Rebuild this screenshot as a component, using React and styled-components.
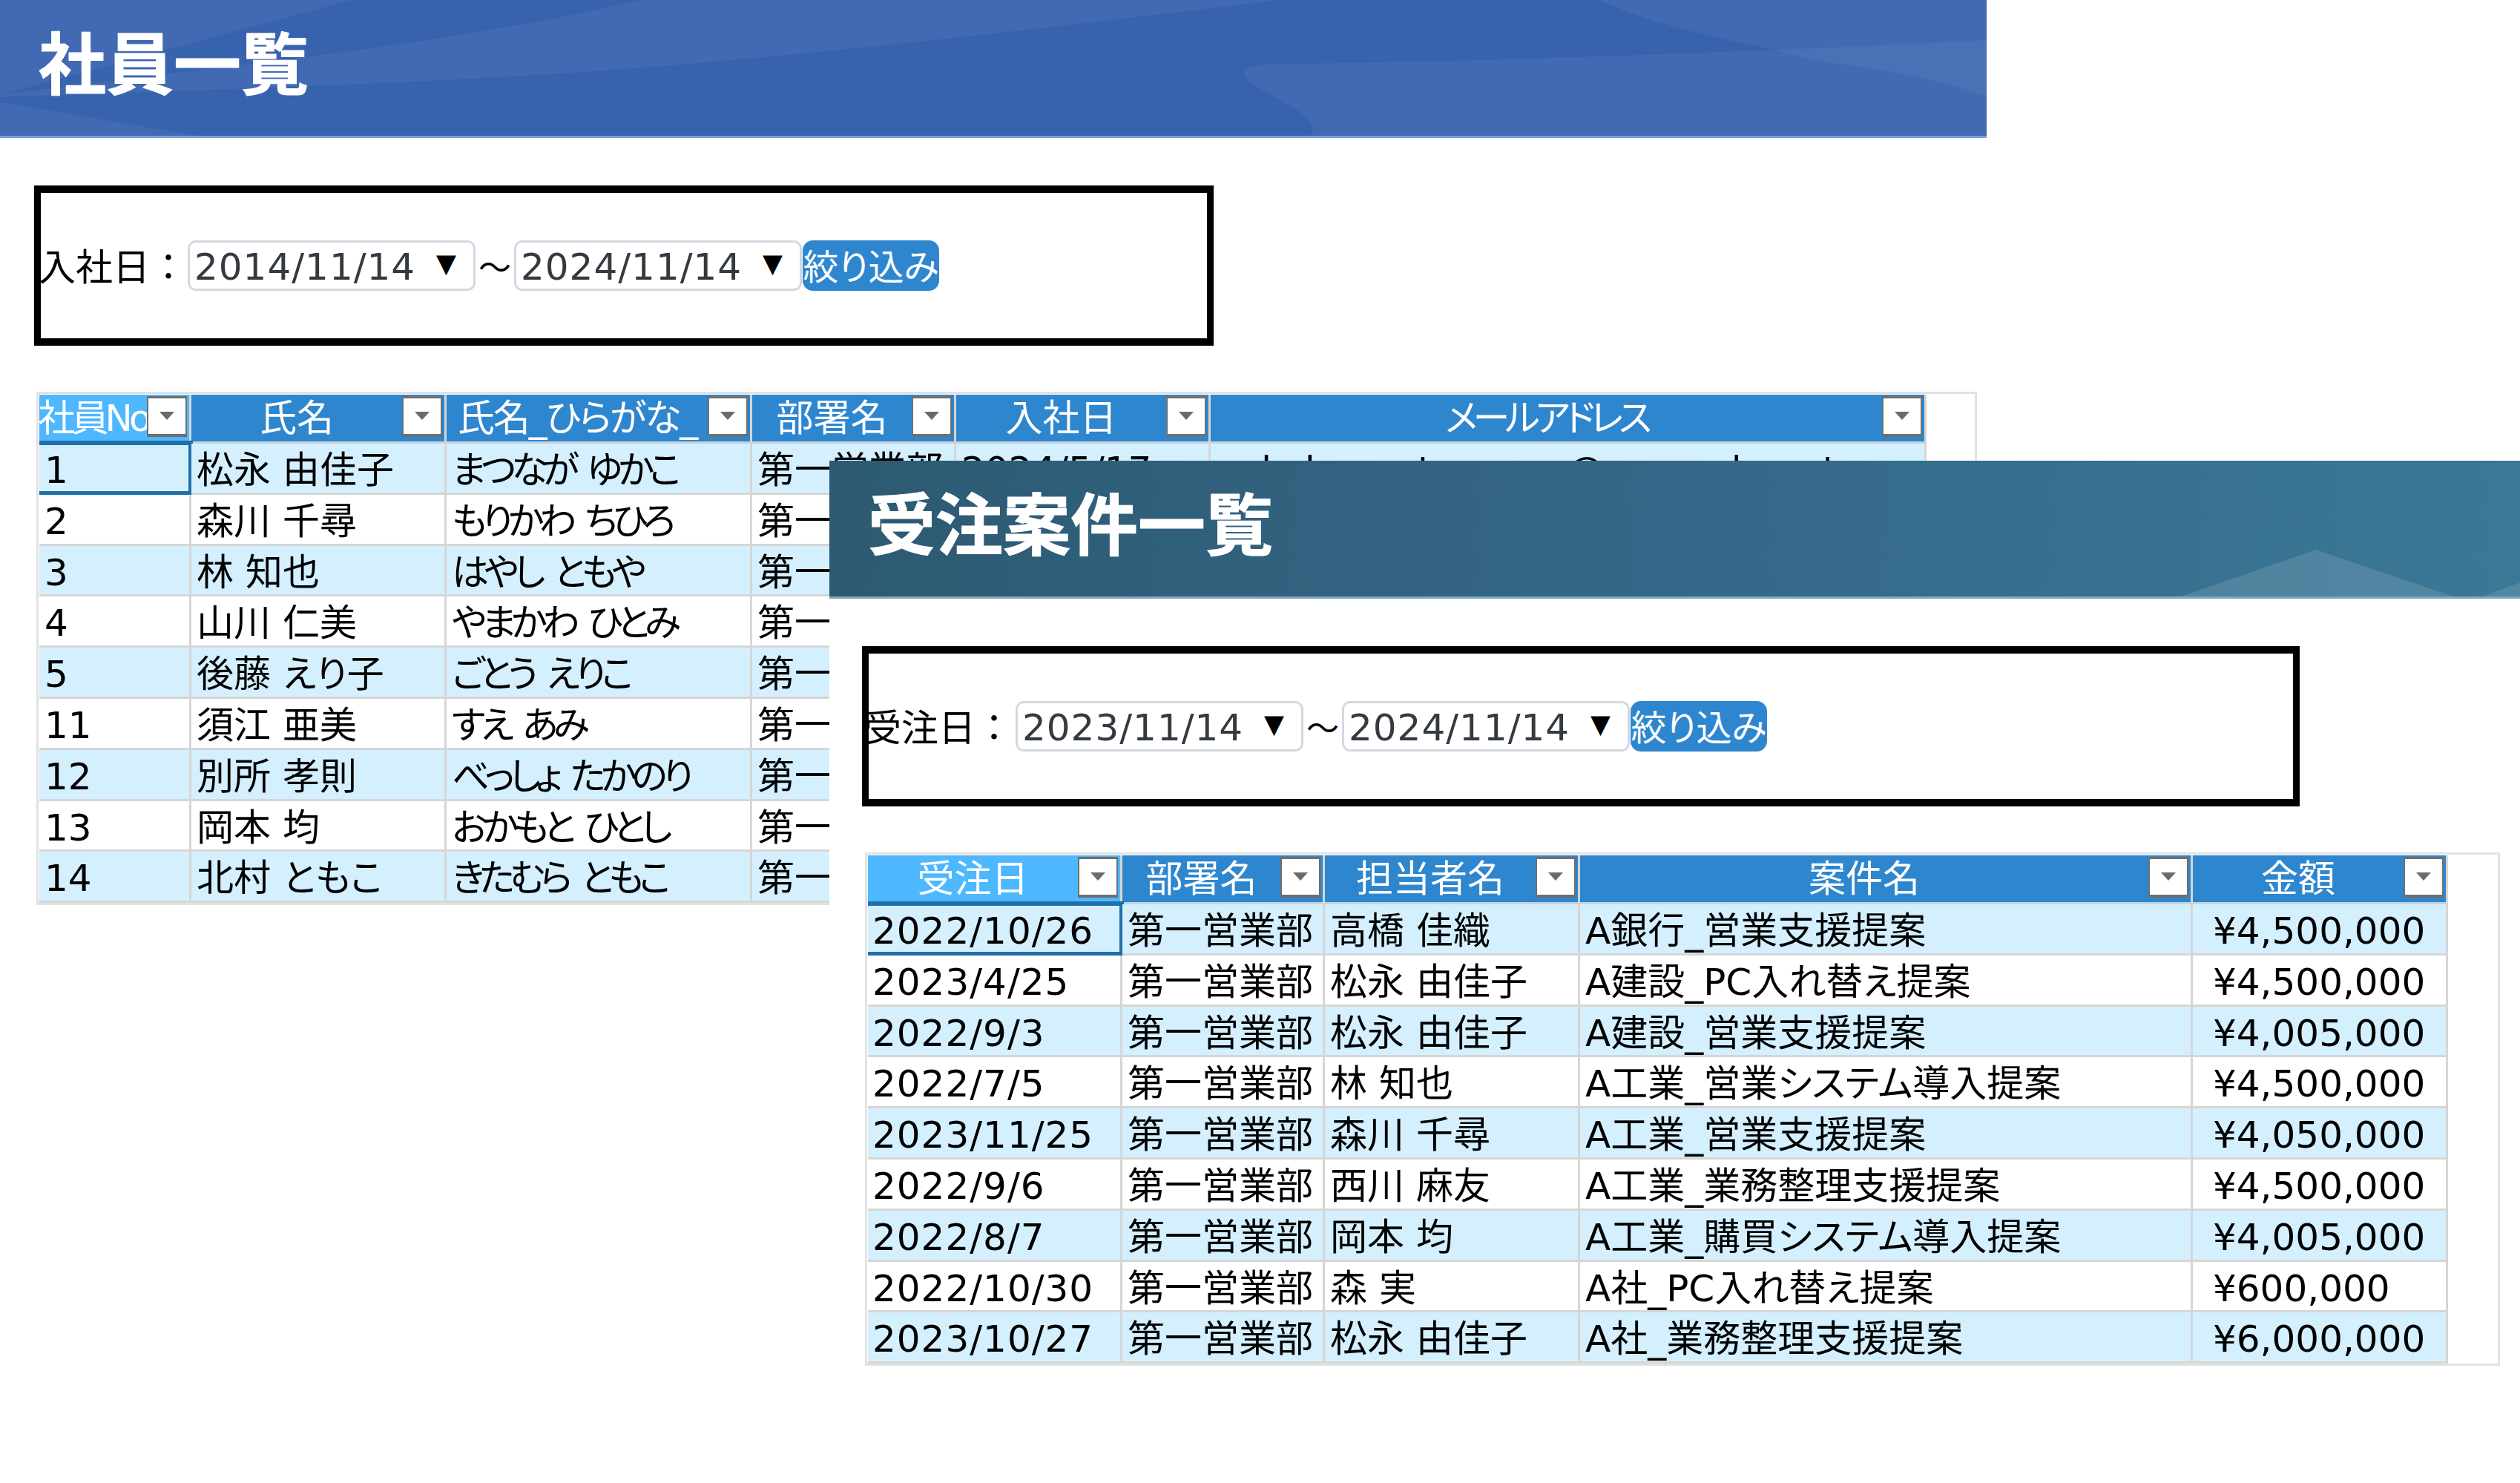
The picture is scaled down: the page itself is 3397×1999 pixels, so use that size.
import styled, { createGlobalStyle } from "styled-components";

const GlobalStyle = createGlobalStyle`
  html, body {
    margin: 0;
    padding: 0;
    background: #fff;
  }
  body {
    font-family: "DejaVu Sans", "Noto Sans CJK JP", sans-serif;
    font-size: 50px;
    color: #000;
  }
`;

const Page = styled.div`
  position: relative;
  width: 3397px;
  height: 1999px;
  overflow: hidden;
  background: #fff;
`;

const FrontWindow = styled.section`
  position: absolute;
  left: 1118px;
  top: 621px;
  right: 0;
  bottom: 0;
  background: #fff;
`;

const Banner = styled.header`
  position: relative;
  box-sizing: border-box;
  height: 186px;
  width: ${(p) => p.$width};
  padding-left: 52px;
  display: flex;
  align-items: center;
  overflow: hidden;
  background: ${(p) => p.$bg};
  border-bottom: 3px solid ${(p) => p.$line};
`;

const BannerArt = styled.svg`
  position: absolute;
  left: 0;
  top: 0;
  width: 100%;
  height: 100%;
`;

const Title = styled.h1`
  position: relative;
  margin: 0 0 23px;
  font-family: "Noto Sans CJK JP", sans-serif;
  font-size: 91px;
  font-weight: 700;
  line-height: 1;
  color: #fff;
  -webkit-text-stroke: 1px #fff;
`;

const FilterBox = styled.div`
  box-sizing: border-box;
  width: ${(p) => p.$width};
  height: 216px;
  margin: 64px 0 0 ${(p) => p.$left};
  display: flex;
  align-items: center;
  border: solid #000;
  border-width: 10px 9px;
  background: #fff;
`;

const FilterLabel = styled.span`
  flex: none;
  width: ${(p) => 198 + p.$shift}px;
  margin: 0 0 4px -${(p) => p.$shift}px;
  font-family: "Noto Sans CJK JP", sans-serif;
  font-size: 50px;
  line-height: 1;
  white-space: nowrap;
`;

const DateField = styled.div`
  flex: none;
  box-sizing: border-box;
  width: 388px;
  height: 68px;
  padding: 4px 22px 0 6px;
  display: flex;
  align-items: center;
  justify-content: space-between;
  border: 3px solid #d3d9e3;
  border-radius: 11px;
  font-size: 50px;
  letter-spacing: 1px;
  color: #343a40;
  background: #fff;
`;

const DateArrow = styled.span`
  font-family: "DejaVu Sans", sans-serif;
  font-size: 35px;
  line-height: 1;
  color: #000;
  margin-top: -10px;
`;

const Tilde = styled.span`
  flex: none;
  width: 52px;
  text-align: center;
  font-family: "Noto Sans CJK JP", sans-serif;
  font-size: 44px;
  line-height: 1;
`;

const ApplyButton = styled.button`
  flex: none;
  box-sizing: border-box;
  width: 184px;
  height: 68px;
  margin-left: 1px;
  padding: 0 0 4px;
  border: 0;
  border-radius: 14px;
  background: #2e86cf;
  color: #fff;
  font-family: "Noto Sans CJK JP", sans-serif;
  font-size: 48px;
  line-height: 1;
  font-feature-settings: "palt";
  white-space: nowrap;
`;

const TableFrame = styled.div`
  box-sizing: border-box;
  width: ${(p) => p.$width};
  margin: 62px 0 0 ${(p) => p.$left};
  padding: 1px 0 0 1px;
  border: 3px solid #e2e2e2;
`;

const Row = styled.div`
  display: grid;
  grid-template-columns: ${(p) => p.$cols};
  width: max-content;
`;

const HeadCell = styled.div`
  box-sizing: border-box;
  height: 66px;
  display: flex;
  align-items: center;
  background: ${(p) => (p.$active ? "#4db8ff" : "#2e86cf")};
  border-right: 3px solid #d6d6d6;
  border-bottom: 3px solid #c4d3de;
  color: #fff;
`;

const HeadLabel = styled.span`
  flex: 1;
  min-width: 0;
  display: flex;
  justify-content: center;
  white-space: nowrap;
  line-height: 1;
  font-feature-settings: "palt";
  letter-spacing: ${(p) => p.$spacing || "0"};
`;

const FilterToggle = styled.button`
  flex: none;
  box-sizing: border-box;
  width: 54px;
  height: 55px;
  margin: -5px 3px 0 0;
  padding: 0;
  display: flex;
  align-items: center;
  justify-content: center;
  background: #fff;
  border: solid #6f6f6f;
  border-width: 3px 2px 4px;

  &::before {
    content: "";
    border-style: solid;
    border-width: 11px 10px 0;
    border-color: #6b6b6b transparent transparent;
  }
`;

const Cell = styled.div`
  position: relative;
  box-sizing: border-box;
  height: 68.8px;
  padding-left: ${(p) => p.$pad || "7px"};
  background: ${(p) => (p.$striped ? "#d4f0ff" : "#fff")};
  border-right: 3px solid #d6d6d6;
  border-bottom: 3px solid #d6d6d6;
  line-height: 63px;
  white-space: pre;
  font-feature-settings: "palt";
  letter-spacing: ${(p) => p.$spacing || "0"};
  word-spacing: ${(p) => p.$wordGap || "0"};

  /* keeps the same baseline for latin-only and CJK cells */
  &::before {
    content: "\\200b";
    font-family: "Noto Sans CJK JP", sans-serif;
  }

  ${(p) =>
    p.$selected &&
    `
    &::after {
      content: "";
      position: absolute;
      left: 0;
      top: -4px;
      right: -5px;
      bottom: -5px;
      border: solid #1f6fa8;
      border-width: 6px 6px 7px 0;
    }
  `}
`;

const waveLight = "rgba(255,255,255,0.05)";

const employeeColumns = "205px 344px 412px 275px 343px 965px";
const orderColumns = "343px 273px 344px 826px 344px";

const employeeHeads = ["社員No", "氏名", "氏名_ひらがな_", "部署名", "入社日", "メールアドレス"];
const employees = [
  ["1", "松永 由佳子", "まつなが ゆかこ", "第一営業部", "2024/5/17", "yukako.matsunaga@example.net"],
  ["2", "森川 千尋", "もりかわ ちひろ", "第一営業部", "", ""],
  ["3", "林 知也", "はやし ともや", "第一営業部", "", ""],
  ["4", "山川 仁美", "やまかわ ひとみ", "第一営業部", "", ""],
  ["5", "後藤 えり子", "ごとう えりこ", "第一営業部", "", ""],
  ["11", "須江 亜美", "すえ あみ", "第一営業部", "", ""],
  ["12", "別所 孝則", "べっしょ たかのり", "第一営業部", "", ""],
  ["13", "岡本 均", "おかもと ひとし", "第一営業部", "", ""],
  ["14", "北村 ともこ", "きたむら ともこ", "第一営業部", "", ""],
];

const orderHeads = ["受注日", "部署名", "担当者名", "案件名", "金額"];
const orders = [
  ["2022/10/26", "第一営業部", "高橋 佳織", "A銀行_営業支援提案", "¥4,500,000"],
  ["2023/4/25", "第一営業部", "松永 由佳子", "A建設_PC入れ替え提案", "¥4,500,000"],
  ["2022/9/3", "第一営業部", "松永 由佳子", "A建設_営業支援提案", "¥4,005,000"],
  ["2022/7/5", "第一営業部", "林 知也", "A工業_営業システム導入提案", "¥4,500,000"],
  ["2023/11/25", "第一営業部", "森川 千尋", "A工業_営業支援提案", "¥4,050,000"],
  ["2022/9/6", "第一営業部", "西川 麻友", "A工業_業務整理支援提案", "¥4,500,000"],
  ["2022/8/7", "第一営業部", "岡本 均", "A工業_購買システム導入提案", "¥4,005,000"],
  ["2022/10/30", "第一営業部", "森 実", "A社_PC入れ替え提案", "¥600,000"],
  ["2023/10/27", "第一営業部", "松永 由佳子", "A社_業務整理支援提案", "¥6,000,000"],
];

// per-column tweaks: { columnIndex: { pad, spacing, wordGap } }
const employeeTweaks = { 2: { spacing: "-6.5px", wordGap: "8px" } };
const orderTweaks = { 0: { spacing: "1px", pad: "6px" }, 4: { pad: "27px" } };

// headers whose kana or latin run narrower than the default font
const headSpacing = { 社員No: "-5px", "氏名_ひらがな_": "-2px", メールアドレス: "-6px" };

const DataTable = ({ cols, heads, rows, tweaks }) => (
  <>
    <Row $cols={cols}>
      {heads.map((head, i) => (
        <HeadCell key={head} $active={i === 0}>
          <HeadLabel $spacing={headSpacing[head]}>{head}</HeadLabel>
          <FilterToggle aria-label={`${head} filter`} />
        </HeadCell>
      ))}
    </Row>
    {rows.map((row, r) => (
      <Row key={r} $cols={cols}>
        {row.map((value, c) => (
          <Cell
            key={c}
            $striped={r % 2 === 0}
            $selected={r === 0 && c === 0}
            $pad={tweaks[c]?.pad}
            $spacing={tweaks[c]?.spacing}
            $wordGap={tweaks[c]?.wordGap}
          >
            {value}
          </Cell>
        ))}
      </Row>
    ))}
  </>
);

const DateFilter = ({ label, from, to, width, left, shift }) => (
  <FilterBox $width={width} $left={left}>
    <FilterLabel $shift={shift}>{label}</FilterLabel>
    <DateField>
      {from}
      <DateArrow>▼</DateArrow>
    </DateField>
    <Tilde>～</Tilde>
    <DateField>
      {to}
      <DateArrow>▼</DateArrow>
    </DateField>
    <ApplyButton>絞り込み</ApplyButton>
  </FilterBox>
);

const App = () => (
  <Page>
    <GlobalStyle />
    <main>
      <Banner $width="2678px" $bg="#3762ae" $line="#7f9fd8">
        <BannerArt viewBox="0 0 2678 186" preserveAspectRatio="none" aria-hidden="true">
          <path d="M0 0H474L0 130Z" fill={waveLight} />
          <path d="M862 0H1724C1400 40 1207 63 900 90 600 115 300 122 0 133V130C300 90 620 60 862 0Z" fill={waveLight} />
          <path d="M0 140L267 186H0Z" fill={waveLight} />
          <path d="M2155 0H2678V132C2560 90 2450 90 2397 69 2300 50 2220 30 2155 0Z" fill={waveLight} />
          <path d="M1767 186C1790 150 1660 120 1680 95 1700 84 1730 87 1759 87 2000 84 2400 70 2678 55V186Z" fill={waveLight} />
        </BannerArt>
        <Title>社員一覧</Title>
      </Banner>
      <DateFilter label="入社日：" from="2014/11/14" to="2024/11/14" width="1590px" left="46px" shift={3} />
      <TableFrame $width="2616px" $left="49px">
        <DataTable cols={employeeColumns} heads={employeeHeads} rows={employees} tweaks={employeeTweaks} />
      </TableFrame>
    </main>
    <FrontWindow>
      <Banner $width="100%" $bg="linear-gradient(92deg, #2d5a72 0%, #35698a 55%, #3b7896 100%)" $line="#7fa8bc">
        <BannerArt viewBox="0 0 2279 186" preserveAspectRatio="none" aria-hidden="true">
          <path d="M1822 186L2004 122 2189 186Z" fill="rgba(255,255,255,0.12)" />
          <path d="M2229 186L2279 167V186Z" fill="rgba(255,255,255,0.12)" />
        </BannerArt>
        <Title>受注案件一覧</Title>
      </Banner>
      <DateFilter label="受注日：" from="2023/11/14" to="2024/11/14" width="1938px" left="44px" shift={6} />
      <TableFrame $width="2204px" $left="48px">
        <DataTable cols={orderColumns} heads={orderHeads} rows={orders} tweaks={orderTweaks} />
      </TableFrame>
    </FrontWindow>
  </Page>
);

export default App;
